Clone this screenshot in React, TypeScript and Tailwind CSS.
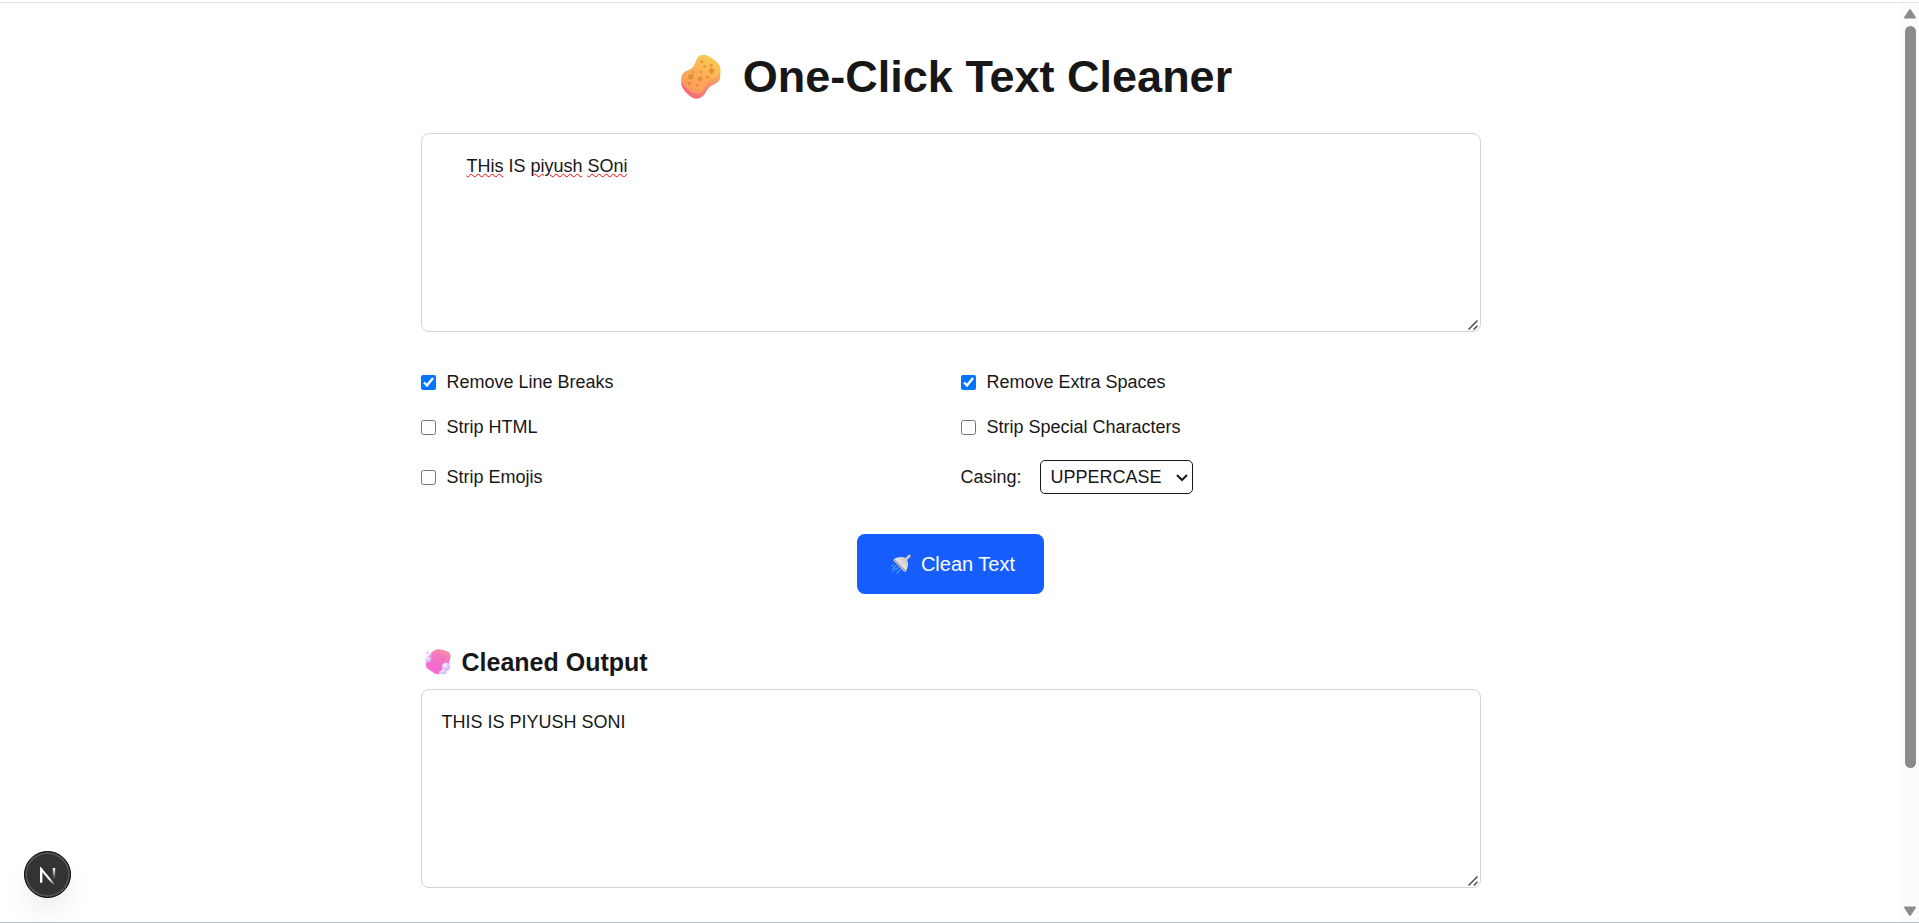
import { useState } from "react";
import type { ReactNode } from "react";

function Sponge() {
  return (
    <svg aria-hidden="true" viewBox="0 0 120 134" className="h-11 w-10 shrink-0">
      <defs>
        <linearGradient id="spongeTop" x1="0.75" y1="0" x2="0.2" y2="1">
          <stop offset="0" stopColor="#f9cd50" />
          <stop offset="0.5" stopColor="#fbad57" />
          <stop offset="1" stopColor="#fa9560" />
        </linearGradient>
        <linearGradient id="spongeSide" x1="1" y1="0" x2="0.2" y2="1">
          <stop offset="0" stopColor="#f0bd55" />
          <stop offset="0.5" stopColor="#f59a66" />
          <stop offset="1" stopColor="#fb6380" />
        </linearGradient>
      </defs>
      <path
        fill="url(#spongeSide)"
        d="M68 0C78 0 92 9 106 20C116 28 120 38 119 54L118 70C116 82 105 88 92 94C82 99 77 112 69 122C60 133 45 136 34 130C23 124 8 110 2 97C-1 89 0 74 1 66C4 54 14 50 27 44C40 38 43 20 50 9C55 2 61 0 68 0Z"
      />
      <path
        fill="url(#spongeTop)"
        d="M68 0C78 0 92 9 106 20C118 30 122 46 116 57C110 68 98 71 88 77C77 84 73 98 66 108C58 119 44 121 34 115C22 108 8 96 3 84C-2 70 3 56 15 49C21 46 26 45 31 42C42 35 43 19 50 9C55 2 61 0 68 0Z"
      />
      <g fill="#e0862f" opacity="0.8">
        <circle cx="29" cy="66" r="8" />
        <circle cx="92" cy="48" r="8" />
        <circle cx="57" cy="73" r="7" />
        <circle cx="63" cy="21" r="4.5" />
        <circle cx="71" cy="35" r="4" />
        <circle cx="91" cy="32" r="4.5" />
        <circle cx="37" cy="52" r="3.5" />
        <circle cx="60" cy="52" r="4" />
        <circle cx="80" cy="67" r="4" />
        <circle cx="25" cy="87" r="4.5" />
        <circle cx="48" cy="93" r="4" />
      </g>
    </svg>
  );
}

function Shower() {
  return (
    <svg aria-hidden="true" viewBox="0 0 60 60" className="size-5 shrink-0">
      <defs>
        <linearGradient id="showerHead" x1="0" y1="1" x2="1" y2="0">
          <stop offset="0" stopColor="#b9b3c4" />
          <stop offset="0.5" stopColor="#e6e3e6" />
          <stop offset="1" stopColor="#bdbac0" />
        </linearGradient>
      </defs>
      <path d="M42 19L55 6" stroke="#c3bfc9" strokeWidth="8" strokeLinecap="round" />
      <path d="M45 14L54 5" stroke="#e9e2d8" strokeWidth="3" strokeLinecap="round" />
      <path
        fill="url(#showerHead)"
        d="M10 15C16 9 35 6 44 12C52 18 54 33 46 50C44 54 40 54 37 51L9 22C7 20 7 17 10 15Z"
      />
      <path d="M10 19L42 50" stroke="#a9a4b4" strokeWidth="6" strokeLinecap="round" />
      <path
        d="M7 32L2 37M15 34L5 44M14 43L5 52M22 40L17 45M29 46L17 58"
        stroke="#4d9bff"
        strokeWidth="3.5"
        strokeLinecap="round"
      />
    </svg>
  );
}

function Soap() {
  return (
    <svg aria-hidden="true" viewBox="0 0 78 78" className="size-[26px] shrink-0">
      <defs>
        <linearGradient id="soapBar" x1="0.8" y1="0" x2="0.3" y2="1">
          <stop offset="0" stopColor="#fb8d9b" />
          <stop offset="0.5" stopColor="#f47bc3" />
          <stop offset="1" stopColor="#fb5fdc" />
        </linearGradient>
        <radialGradient id="soapBubble" cx="0.35" cy="0.3" r="0.8">
          <stop offset="0" stopColor="#f5eeff" />
          <stop offset="1" stopColor="#c9a6f4" />
        </radialGradient>
      </defs>
      <path
        fill="#f66fc9"
        d="M34 2C42 0 60 4 70 9C77 13 78 20 76 28L70 48C66 56 52 69 43 74C38 77 33 76 28 73L8 59C3 55 2 50 3 44L8 26C11 17 24 5 34 2Z"
      />
      <path
        fill="url(#soapBar)"
        d="M36 2C44 1 61 5 70 10C75 13 76 18 74 25C70 38 52 58 42 64C38 66 34 66 30 64L10 50C6 47 5 43 6 38L10 25C13 17 26 4 36 2Z"
      />
      <path
        fill="#ed6fc4"
        opacity="0.55"
        d="M40 11L61 20Q66 23 63 29L44 53Q40 57 35 54L19 42Q15 38 18 33L31 15Q35 10 40 11Z"
      />
      <circle cx="10" cy="31" r="9" fill="url(#soapBubble)" />
      <circle cx="7" cy="11" r="4" fill="url(#soapBubble)" />
      <circle cx="17" cy="17" r="3" fill="url(#soapBubble)" />
      <circle cx="63" cy="53" r="12" fill="url(#soapBubble)" />
      <circle cx="56" cy="68" r="8" fill="url(#soapBubble)" />
      <circle cx="47" cy="70" r="5" fill="url(#soapBubble)" />
    </svg>
  );
}

function Option({ label, checked = false }: { label: string; checked?: boolean }) {
  return (
    <label className="flex items-center gap-[11px]">
      <input type="checkbox" defaultChecked={checked} className="size-[15px]" />
      {label}
    </label>
  );
}

/* Holds a textarea and draws the resize grip in its corner. */
function Box({ className, children }: { className: string; children: ReactNode }) {
  return (
    <div className={`relative ${className}`}>
      {children}
      <svg
        aria-hidden="true"
        viewBox="0 0 10 10"
        className="pointer-events-none absolute right-[3px] bottom-0.5 size-2.5"
        fill="none"
        stroke="#4a4a4a"
        strokeWidth="1.5"
      >
        <path d="M.5 9.5L9.5.5M5.8 9.5L9.5 5.8" />
      </svg>
    </div>
  );
}

const boxClass =
  "block h-[199px] w-full resize-y rounded-lg border border-[#d1d5dc] bg-white px-5 py-[18px] text-lg leading-7 outline-none [&::-webkit-resizer]:bg-transparent";

const spellMark = "underline decoration-[#ff0000] decoration-wavy decoration-1 underline-offset-1";

export default function App() {
  const [text, setText] = useState("     THis IS piyush SOni");
  const [edited, setEdited] = useState(false);
  const [casing, setCasing] = useState("UPPERCASE");

  return (
    <div className="flex h-screen flex-col overflow-hidden border-b border-[#b4bbc2] bg-white font-['Liberation_Sans',Arial,sans-serif] text-lg leading-[27px] text-[#171717]">
      <div className="mt-0.5 h-px shrink-0 bg-[#e2e2e2]" />
      <div className="flex min-h-0 flex-1">
        <main className="min-w-0 flex-1 overflow-hidden px-8 pt-[50px]">
          <div className="mx-auto max-w-[1060px]">
            <h1 className="flex items-center justify-center gap-[22px] pl-3 text-[45px] leading-[48px] font-bold">
              <Sponge />
              One-Click Text Cleaner
            </h1>

            <Box className="mt-8">
              <textarea
                aria-label="Text to clean"
                spellCheck={false}
                value={text}
                onChange={(e) => {
                  setText(e.target.value);
                  setEdited(true);
                }}
                className={boxClass}
              />
              {!edited && (
                <div
                  aria-hidden="true"
                  className="pointer-events-none absolute inset-0 border border-transparent px-5 py-[18px] leading-7 whitespace-pre text-transparent"
                >
                  {"     "}
                  <span className={spellMark}>THis</span> IS <span className={spellMark}>piyush</span>{" "}
                  <span className={spellMark}>SOni</span>
                </div>
              )}
            </Box>

            <div className="mt-[37px] grid grid-cols-2 items-center gap-x-5 gap-y-[18px]">
              <Option label="Remove Line Breaks" checked />
              <Option label="Remove Extra Spaces" checked />
              <Option label="Strip HTML" />
              <Option label="Strip Special Characters" />
              <Option label="Strip Emojis" />
              <div className="flex h-9 items-center gap-[18px]">
                <label htmlFor="casing">Casing:</label>
                <div className="relative">
                  <select
                    id="casing"
                    value={casing}
                    onChange={(e) => setCasing(e.target.value)}
                    className="block h-[34px] w-[153px] appearance-none rounded-[5px] border border-[#171717] bg-white pl-2.5"
                  >
                    <option>None</option>
                    <option>UPPERCASE</option>
                    <option>lowercase</option>
                    <option>Title Case</option>
                  </select>
                  <svg
                    aria-hidden="true"
                    viewBox="0 0 12 8"
                    className="pointer-events-none absolute top-[14px] right-[5px] h-2 w-3"
                    fill="none"
                    stroke="#171717"
                    strokeWidth="2"
                  >
                    <path d="M1 1L6 6L11 1" />
                  </svg>
                </div>
              </div>
            </div>

            <div className="mt-[39px] flex justify-center">
              <button
                type="button"
                className="flex h-[60px] items-center gap-2.5 rounded-lg bg-[#155dfc] pr-[29px] pl-[34px] text-xl text-white"
              >
                <Shower />
                Clean Text
              </button>
            </div>

            <h2 className="mt-[53px] flex items-center gap-[11px] pl-1 text-[25px] leading-[30px] font-bold">
              <Soap />
              Cleaned Output
            </h2>
            <Box className="mt-3">
              <textarea
                aria-label="Cleaned output"
                readOnly
                spellCheck={false}
                value="THIS IS PIYUSH SONI"
                className={boxClass}
              />
            </Box>
          </div>
        </main>

        <div aria-hidden="true" className="flex w-[18px] shrink-0 flex-col items-center bg-[#fcfcfc] pt-1.5 pb-1.5">
          <svg viewBox="0 0 12 10" className="h-2.5 w-3 shrink-0 fill-[#8b8b8b]">
            <path d="M5 .8Q6-.6 7 .8L11.7 8Q12.4 9.6 11 9.6H1Q-.4 9.6.3 8Z" />
          </svg>
          <div className="mt-[7px] w-[11px] flex-[743] rounded-full bg-[#8b8b8b]" />
          <div className="flex-[138]" />
          <svg viewBox="0 0 12 10" className="h-2.5 w-3 shrink-0 rotate-180 fill-[#8b8b8b]">
            <path d="M5 .8Q6-.6 7 .8L11.7 8Q12.4 9.6 11 9.6H1Q-.4 9.6.3 8Z" />
          </svg>
        </div>
      </div>

      <button
        type="button"
        aria-label="Open developer tools"
        className="fixed bottom-[25px] left-6 flex size-[47px] items-center justify-center rounded-full border border-black bg-[#333333] shadow-[inset_0_0_0_2px_#525252,0_16px_32px_-8px_rgba(0,0,0,0.14)]"
      >
        <svg aria-hidden="true" viewBox="0 0 48 48" className="size-12 shrink-0" fill="none">
          <defs>
            <linearGradient id="markDiagonal" x1="24" y1="24" x2="32" y2="33" gradientUnits="userSpaceOnUse">
              <stop offset="0.3" stopColor="#fff" />
              <stop offset="1" stopColor="#fff" stopOpacity="0" />
            </linearGradient>
            <linearGradient id="markStem" x1="0" y1="17" x2="0" y2="28" gradientUnits="userSpaceOnUse">
              <stop offset="0" stopColor="#fff" />
              <stop offset="1" stopColor="#fff" stopOpacity="0" />
            </linearGradient>
          </defs>
          <path d="M17 31.5V18L30.5 34" stroke="url(#markDiagonal)" strokeWidth="2" />
          <path d="M17.2 31.5V17" stroke="#fff" strokeWidth="2.4" />
          <path d="M30 17V28" stroke="url(#markStem)" strokeWidth="2.4" />
        </svg>
      </button>
    </div>
  );
}
